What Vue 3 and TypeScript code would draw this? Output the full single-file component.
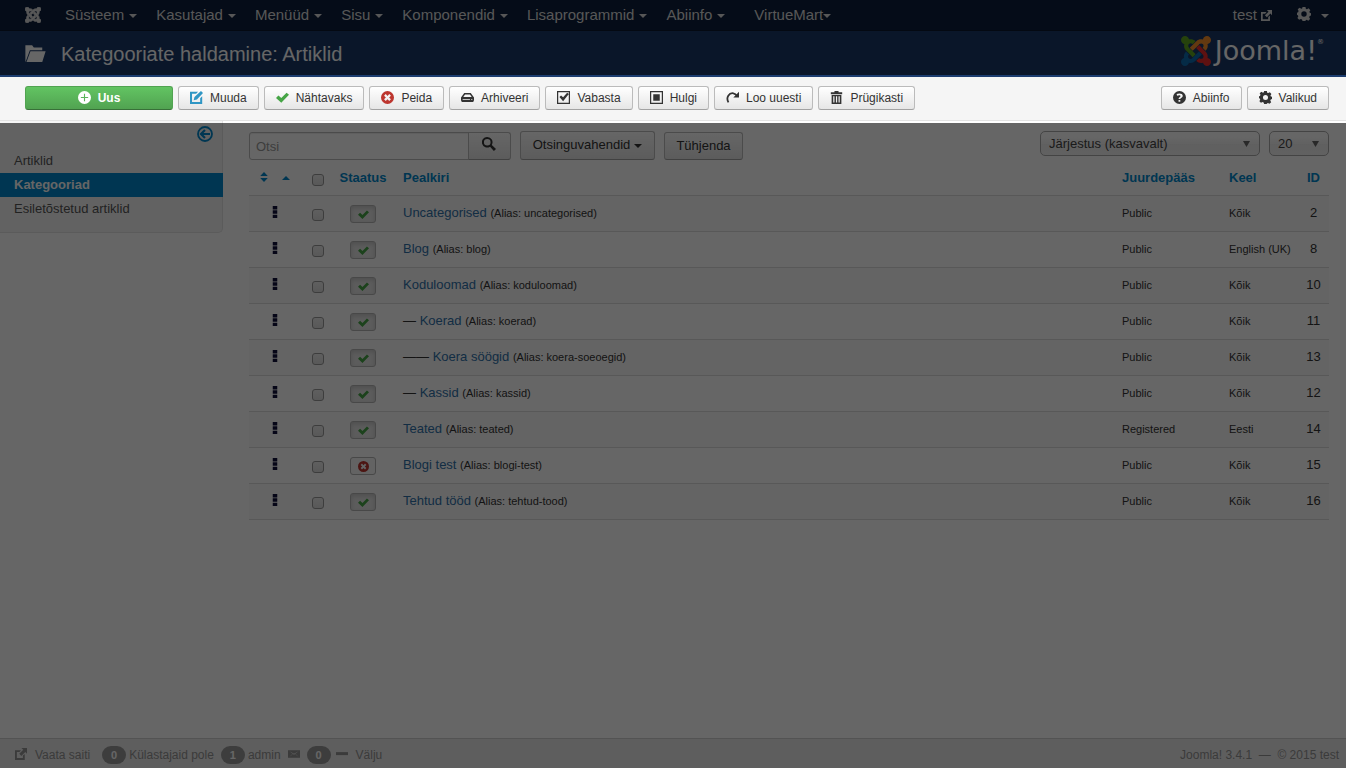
<script setup lang="ts">
import { ref } from 'vue'

interface Icon { fill?: string; stroke?: string; width?: number }

const icons: Record<string, Icon> = {
  plus: { fill: 'M8 0a8 8 0 1 0 0 16A8 8 0 0 0 8 0zM7.3 3.5h1.4v3.8h3.8v1.4H8.7v3.8H7.3V8.700H3.500V7.300h3.800z' },
  edit: { fill: 'M0 1h10L7.500 3.500H2.500v10h10V9L15 6.500V16H0zM13.500 0L16 2.500L8.500 10.500L4.500 11.500l1-4z' },
  check: { fill: 'M0 8.500l3-3 3.500 3.200L13 2l3 2.700L6.500 14.500z' },
  cancel: { fill: 'M8 0a8 8 0 1 0 0 16A8 8 0 0 0 8 0zM5.800 3.800L8 6l2.200-2.200 2 2L10 8l2.200 2.200-2 2L8 10l-2.200 2.200-2-2L6 8 3.800 5.800z' },
  drive: { fill: 'M4 2.500h8L16 8v3.500l-1 2H1l-1-2V8zM5 4.200L2.800 7.500h10.400l-2.200-3.300zM2 10v1.200h9V10zM12.500 10v1.200H14V10z' },
  checkin: { fill: 'M0 0h16v16H0zM1.500 1.500v13h13v-13zM3 7.500L5 5.500l2.500 2.300L12.500 2l2 1.800L7.500 12.500z' },
  batch: { fill: 'M0 0h16v16H0zM1.500 1.500v13h13v-13zM4 4h8v8H4z' },
  redo: { fill: 'M16 1v7H9l2.600-2.500z', stroke: 'M3 14C-.5 8 4 2 9 2.800c2 .3 3.500 1.500 4.500 3', width: 2.2 },
  trash: { fill: 'M5.500 0h5v1.500H15V4H1V1.500h4.500zM2 5h12v11H2zM4 6.500V14h1.500V6.500zM7.300 6.500V14h1.500V6.500zM10.500 6.500V14H12V6.500z' },
  help: { fill: 'M8 0a8 8 0 1 0 0 16A8 8 0 0 0 8 0zM4.500 3.800C6.500 2.500 12 2.300 12 6c0 2-3 2.300-3 3.800H6.800C6.800 7.500 9.300 7.300 9.300 6S6.500 5 5 5.800zM6.800 11H9v2.200H6.800z' },
  gear: { fill: 'M6.300 0h3.400l.4 2 1.200.6 2-1.100 2 2.100-1.200 1.900.5 1.200 1.400.5v2.600l-1.500.6-.6 1.400 1.100 2-2.100 2-1.900-1.100-1.200.6L9.500 16H6.300l-.6-1.800-1.300-.6-2 1L.5 12.500l1-2L1 9.300 0 9V6.500l1.200-.5.6-1.300-1-2L3 .9l1.900 1.200 1-.5zM8 4.900a3.100 3.100 0 1 0 0 6.200A3.100 3.100 0 0 0 8 4.900z' },
  external: { fill: 'M0 3h8L6 5.300H2.500v8h8V10l2.500-2v8H0zM8.500 0H16v7.500l-2.300-2.300L8.500 10.500 5.700 7.700l5.300-5.300z' },
  search: { fill: 'M6 0a6 6 0 1 0 3.200 11l4.400 4.900 2.400-2.300L11.200 9A6 6 0 0 0 6 0zM6 2.200a3.800 3.800 0 1 1 0 7.600A3.800 3.800 0 0 1 6 2.200z' },
  mail: { fill: 'M0 3h16v10H0zM1.500 4L8 9l6.500-5L8 7.500zM1.500 12L6 8.500l-.5-.3zM14.500 12L10 8.500l.5-.3z' },
  minus: { fill: 'M0 5.500h16v4H0z' },
  back: { stroke: 'M8 1a7 7 0 1 0 0 14A7 7 0 0 0 8 1z', width: 1.8 },
  dots: { fill: 'M5 0h6v4.500H5zM5 5.800h6v4.500H5zM5 11.500h6V16H5z' },
  sort: { fill: 'M8 0l6 6.500H2zM8 16L2 9.500h12z' },
  folder: { fill: 'M0 16V1h6l1.500 2H15v2.500H4L.5 15zM4.500 6.500H18l-3 9.500H1z' },
}

const marks = [
  { name: 'blue', d: 'M16.719 14.759L14.22 17.26l-2.37 2.37-.462.466c-1.368 1.365-3.297 1.83-5.047 1.397-.327 1.424-1.604 2.49-3.13 2.49C1.438 23.983 0 22.547 0 20.772c0-1.518 1.055-2.789 2.469-3.123-.446-1.76.016-3.705 1.396-5.08l.179-.18 2.37 2.37-.184.181c-.769.779-.769 2.024 0 2.789.771.78 2.022.78 2.787 0l.465-.465 2.367-2.371 2.502-2.506 2.367 2.372z' },
  { name: 'red', d: 'M17.643 21.411c-1.822.563-3.885.12-5.328-1.318l-.18-.185 2.365-2.369.18.184c.771.768 2.018.768 2.787 0 .765-.765.769-2.01-.004-2.781l-.466-.465-2.365-2.37-2.502-2.503 2.37-2.369 2.499 2.505 2.367 2.37.464.464c1.365 1.36 1.846 3.278 1.411 5.021 1.56.224 2.759 1.56 2.759 3.18 0 1.784-1.439 3.21-3.209 3.21-1.545 0-2.851-1.096-3.135-2.565z' },
  { name: 'orange', d: 'M6.975 9.461L9.46 6.975l2.37-2.369.462-.461C13.74 2.7 15.772 2.251 17.58 2.79 17.79 1.212 19.148 0 20.791 0 22.56 0 24 1.434 24 3.209c0 1.631-1.217 2.979-2.79 3.186.519 1.799.068 3.816-1.35 5.234l-.182.184-2.369-2.369.184-.184c.769-.77.769-2.016 0-2.783-.766-.766-2.011-.768-2.781.003l-.462.461-2.37 2.369-2.505 2.502-2.37-2.354z' },
  { name: 'green', d: 'M3.065 6.551C1.346 6.398 0 4.957 0 3.199 0 1.429 1.438 0 3.209 0c1.603 0 2.937 1.166 3.171 2.699 1.771-.465 3.743.004 5.133 1.398l.181.183-2.369 2.37-.182-.184c-.77-.77-2.016-.77-2.783 0-.77.766-.77 2.01 0 2.779l.465.465 2.371 2.369 2.503 2.505-2.367 2.37-2.505-2.503-2.366-2.37L4 11.619c-1.391-1.379-1.846-3.335-1.38-5.094z' },
]

const menu = ['Süsteem', 'Kasutajad', 'Menüüd', 'Sisu', 'Komponendid', 'Lisaprogrammid', 'Abiinfo']

const actions = [
  { icon: 'plus', label: 'Uus', kind: 'new' },
  { icon: 'edit', label: 'Muuda', kind: 'info' },
  { icon: 'check', label: 'Nähtavaks', kind: 'ok' },
  { icon: 'cancel', label: 'Peida', kind: 'bad' },
  { icon: 'drive', label: 'Arhiveeri', kind: '' },
  { icon: 'checkin', label: 'Vabasta', kind: '' },
  { icon: 'batch', label: 'Hulgi', kind: '' },
  { icon: 'redo', label: 'Loo uuesti', kind: '' },
  { icon: 'trash', label: 'Prügikasti', kind: '' },
]

interface Row { id: number; title: string; alias: string; level: number; access: string; language: string; published: boolean }

const rows: Row[] = [
  { id: 2, title: 'Uncategorised', alias: 'uncategorised', level: 0, access: 'Public', language: 'Kõik', published: true },
  { id: 8, title: 'Blog', alias: 'blog', level: 0, access: 'Public', language: 'English (UK)', published: true },
  { id: 10, title: 'Koduloomad', alias: 'koduloomad', level: 0, access: 'Public', language: 'Kõik', published: true },
  { id: 11, title: 'Koerad', alias: 'koerad', level: 1, access: 'Public', language: 'Kõik', published: true },
  { id: 13, title: 'Koera söögid', alias: 'koera-soeoegid', level: 2, access: 'Public', language: 'Kõik', published: true },
  { id: 12, title: 'Kassid', alias: 'kassid', level: 1, access: 'Public', language: 'Kõik', published: true },
  { id: 14, title: 'Teated', alias: 'teated', level: 0, access: 'Registered', language: 'Eesti', published: true },
  { id: 15, title: 'Blogi test', alias: 'blogi-test', level: 0, access: 'Public', language: 'Kõik', published: false },
  { id: 16, title: 'Tehtud tööd', alias: 'tehtud-tood', level: 0, access: 'Public', language: 'Kõik', published: true },
]

const query = ref('')
const order = ref('asc')
const limit = ref('20')
</script>

<template>
  <div class="page">
    <nav class="navbar">
      <a class="brand" href="#" aria-label="Joomla">
        <svg viewBox="0 0 24 24"><path v-for="m in marks" :key="m.name" :d="m.d" /></svg>
      </a>
      <a v-for="m in menu" :key="m" class="menu" href="#">{{ m }}<i class="caret"></i></a>
      <a class="menu shop" href="#">VirtueMart<i class="caret"></i></a>
      <a class="site" href="#">test
        <svg class="icon tiny" viewBox="0 0 16 16"><path :d="icons.external.fill" fill-rule="evenodd" /></svg>
      </a>
      <a class="user" href="#" aria-label="Admin">
        <svg class="icon gear" viewBox="0 0 16 16"><path :d="icons.gear.fill" fill-rule="evenodd" /></svg>
        <i class="caret"></i>
      </a>
    </nav>

    <header class="header">
      <svg class="folder" viewBox="0 0 18 16"><path :d="icons.folder.fill" /></svg>
      <h1>Kategooriate haldamine: Artiklid</h1>
      <div class="logo">
        <svg viewBox="0 0 24 24"><path v-for="m in marks" :key="m.name" :class="m.name" :d="m.d" /></svg>
        <span>Joomla!</span><sup>®</sup>
      </div>
    </header>

    <div class="toolbar">
      <button v-for="a in actions" :key="a.label" type="button" class="btn small" :class="a.kind">
        <svg class="icon" viewBox="0 0 16 16">
          <path :d="icons[a.icon].fill" fill-rule="evenodd" />
          <path v-if="icons[a.icon].stroke" class="line" :d="icons[a.icon].stroke" :stroke-width="icons[a.icon].width" />
        </svg>{{ a.label }}
      </button>
      <span class="spacer"></span>
      <button type="button" class="btn small">
        <svg class="icon" viewBox="0 0 16 16"><path :d="icons.help.fill" fill-rule="evenodd" /></svg>Abiinfo
      </button>
      <button type="button" class="btn small">
        <svg class="icon" viewBox="0 0 16 16"><path :d="icons.gear.fill" fill-rule="evenodd" /></svg>Valikud
      </button>
    </div>

    <div class="body">
      <aside class="sidebar">
        <button type="button" class="toggle" aria-label="Peida külgriba">
          <svg viewBox="0 0 16 16"><path :d="icons.back.stroke" class="line" :stroke-width="icons.back.width" />
            <path d="M13 8H4.500M8 4L4 8l4 4" class="line" stroke-width="2.2" /></svg>
        </button>
        <a href="#">Artiklid</a>
        <a href="#" class="active">Kategooriad</a>
        <a href="#">Esiletõstetud artiklid</a>
      </aside>

      <main class="content">
        <div class="filters">
          <div class="search">
            <input v-model="query" type="text" placeholder="Otsi" aria-label="Otsi" />
            <button type="button" class="btn" aria-label="Otsi">
              <svg class="lens" viewBox="0 0 16 16"><path :d="icons.search.fill" fill-rule="evenodd" /></svg>
            </button>
          </div>
          <button type="button" class="btn tools">Otsinguvahendid<i class="caret"></i></button>
          <button type="button" class="btn clear">Tühjenda</button>
          <span class="spacer"></span>
          <div class="select wide">
            <select v-model="order" aria-label="Järjestus"><option value="asc">Järjestus (kasvavalt)</option></select>
            <svg viewBox="0 0 8 8"><path d="M0 1h8L4 8z" /></svg>
          </div>
          <div class="select">
            <select v-model="limit" aria-label="Kirjeid lehel"><option value="20">20</option></select>
            <svg viewBox="0 0 8 8"><path d="M0 1h8L4 8z" /></svg>
          </div>
        </div>

        <table>
          <colgroup>
            <col class="c-drag" /><col class="c-check" /><col class="c-status" /><col />
            <col class="c-access" /><col class="c-lang" /><col class="c-id" />
          </colgroup>
          <thead>
            <tr>
              <th><a class="sorter" href="#" aria-label="Järjesta">
                <svg class="icon sort" viewBox="0 0 16 16"><path :d="icons.sort.fill" /></svg><i class="caret up"></i>
              </a></th>
              <th class="mid"><input type="checkbox" aria-label="Vali kõik" /></th>
              <th class="mid"><a href="#">Staatus</a></th>
              <th><a href="#">Pealkiri</a></th>
              <th><a href="#">Juurdepääs</a></th>
              <th><a href="#">Keel</a></th>
              <th class="mid"><a href="#">ID</a></th>
            </tr>
          </thead>
          <tbody>
            <tr v-for="r in rows" :key="r.id">
              <td class="mid"><svg class="dots" viewBox="0 0 16 16"><path :d="icons.dots.fill" /></svg></td>
              <td class="mid"><input type="checkbox" :aria-label="r.title" /></td>
              <td class="mid">
                <button type="button" class="state" :class="r.published ? 'ok' : 'bad'" :aria-label="r.title">
                  <svg viewBox="0 0 16 16"><path :d="icons[r.published ? 'check' : 'cancel'].fill" fill-rule="evenodd" /></svg>
                </button>
              </td>
              <td><span v-if="r.level">{{ '—'.repeat(r.level) }}&nbsp;</span><a href="#">{{ r.title }}</a> <small>(Alias: {{ r.alias }})</small></td>
              <td><small>{{ r.access }}</small></td>
              <td><small>{{ r.language }}</small></td>
              <td class="mid">{{ r.id }}</td>
            </tr>
          </tbody>
        </table>
      </main>
    </div>

    <footer class="footer">
      <a href="#" class="view"><svg class="icon" viewBox="0 0 16 16"><path :d="icons.external.fill" fill-rule="evenodd" /></svg>Vaata saiti</a>
      <span class="badge">0</span><span class="after">Külastajaid pole</span>
      <span class="badge">1</span><span class="after">admin</span>
      <svg class="icon mail" viewBox="0 0 16 16"><path :d="icons.mail.fill" fill-rule="evenodd" /></svg>
      <span class="badge">0</span>
      <a href="#" class="exit"><svg class="icon" viewBox="0 0 16 16"><path :d="icons.minus.fill" /></svg>Välju</a>
      <span class="spacer"></span>
      <span>Joomla! 3.4.1 &nbsp;—&nbsp; © 2015 test</span>
    </footer>
  </div>
</template>

<style>
body { margin: 0; background: #fff; }
</style>

<style scoped>
* { box-sizing: border-box; }
.page {
  position: relative;
  display: flex;
  flex-direction: column;
  min-height: 100vh;
  overflow: hidden;
  background: #fff;
  color: #333;
  font: 13px/18px "Liberation Sans", Arial, sans-serif;
}
a { color: #3071a9; text-decoration: none; }
button, input, select { font: inherit; color: inherit; }
svg { display: block; flex: none; fill: currentColor; }
.line { fill: none; stroke: currentColor; }
.spacer { flex: 1; }
.icon { width: 12px; height: 12px; }
.caret {
  display: inline-block;
  border: 4px solid transparent;
  border-top-color: currentColor;
  border-bottom: 0;
}
.caret.up { border-top: 0; border-bottom: 4px solid currentColor; }

.navbar {
  display: flex;
  align-items: center;
  height: 31px;
  padding: 0 17px 0 25px;
  background: #0d1f3c;
  border-bottom: 1px solid #0a172d;
  font-size: 15px;
  line-height: 30px;
}
.navbar a { display: flex; align-items: center; color: #d9d9d9; }
.brand { margin-right: 24px; }
.brand svg { width: 16px; height: 16px; stroke: currentColor; }
.menu { gap: 5px; margin-right: 19px; }
.menu .caret, .user .caret { margin-top: 2px; }
.menu.shop { gap: 0; margin-left: 10px; }
.site { gap: 4px; margin-left: auto; }
.icon.tiny { width: 11px; height: 11px; }
.user { gap: 10px; margin-left: 25px; }
.icon.gear { width: 14px; height: 14px; margin-bottom: 2px; }

.header {
  display: flex;
  align-items: center;
  height: 46px;
  padding: 0 22px 0 25px;
  background: #1a3867;
  border-bottom: 2px solid #1c3d70;
  color: #fff;
}
.folder { width: 21px; height: 18px; }
h1 { flex: 1; margin: 2px 0 0 15px; font-size: 20px; font-weight: 400; line-height: 44px; }
.logo { display: flex; align-items: center; height: 44px; font-family: "DejaVu Sans", sans-serif; font-size: 27px; line-height: 44px; }
.logo svg { width: 30px; height: 30px; margin: 0 4px 4px 0; }
.logo span { margin-bottom: 4px; }
.logo sup { align-self: flex-start; margin-top: 6px; font-size: 7px; line-height: 10px; }
.green { fill: #5fa51f; }
.orange { fill: #f8902a; }
.red { fill: #ea2c2c; }
.blue { fill: #0d6bb0; }

.toolbar {
  position: relative;
  z-index: 1;
  display: flex;
  gap: 5px;
  padding: 9px 17px 10px 25px;
  background: #f5f5f5;
  border-bottom: 1px solid #e3e3e3;
}
/* Guided-tour spotlight: dims everything outside the toolbar */
.toolbar::after {
  content: "";
  position: absolute;
  inset: -2px 0 -3px;
  box-shadow: 0 0 0 200vmax rgba(0, 0, 0, .6);
  pointer-events: none;
}
.btn {
  display: flex;
  align-items: center;
  justify-content: center;
  height: 28px;
  padding: 0 12px;
  border: 1px solid #bbb;
  border-bottom-color: #a2a2a2;
  border-radius: 3px;
  background: linear-gradient(#fff, #e6e6e6);
  white-space: nowrap;
}
.btn.small { gap: 7px; height: 24px; padding: 0 11px; font-size: 12px; line-height: 18px; }
.btn.small .icon { width: 13px; height: 13px; margin-bottom: 2px; }
.btn.new { width: 148px; color: #fff; font-weight: 700; background: linear-gradient(#62c462, #51a351); border-color: #51a351 #51a351 #387038; }
.info .icon { color: #2f96c4; }
.ok { color: #333; }
.ok svg { color: #46a546; }
.bad svg { color: #bd362f; }

.body { display: flex; flex: 1; align-items: flex-start; }
.sidebar {
  display: flex;
  flex-direction: column;
  width: 223px;
  padding: 5px 0 11px;
  background: #f5f5f5;
  border: 1px solid #e3e3e3;
  border-width: 0 1px 1px 0;
  border-radius: 0 0 5px 0;
}
.sidebar a { margin-right: -1px; padding: 3px 14px; color: #555; }
.sidebar a.active { background: #08c; color: #fff; font-weight: 700; }
.toggle { align-self: flex-end; margin: 0 9px 7px 0; padding: 0; border: 0; background: none; color: #08c; }
.toggle svg { width: 16px; height: 16px; }

.content { flex: 1; min-width: 0; padding: 10px 17px 0 26px; }
.filters { display: flex; align-items: flex-end; }
.search { display: flex; margin-right: 9px; }
.search input {
  width: 220px;
  height: 28px;
  padding: 0 6px;
  border: 1px solid #bbb;
  border-radius: 3px 0 0 3px;
  background: #fff;
  box-shadow: inset 0 1px 1px rgba(0, 0, 0, .075);
}
.search input::placeholder { color: #999; opacity: 1; }
.search .btn { width: 43px; margin-left: -1px; border-radius: 0 3px 3px 0; }
.lens { width: 14px; height: 14px; margin: 0 2px 4px 0; }
.btn.tools { gap: 4px; width: 135px; height: 29px; margin-right: 9px; padding-bottom: 2px; }
.btn.tools .caret { margin-top: 2px; }
.btn.clear { width: 79px; }
.select { position: relative; align-self: flex-start; width: 60px; margin-left: 9px; }
.select.wide { width: 220px; }
.select select {
  display: block;
  width: 100%;
  height: 25px;
  padding: 0 8px;
  border: 1px solid #aaa;
  border-radius: 5px;
  background: linear-gradient(#fff 20%, #f4f4f4 50%, #eee 52%, #f4f4f4);
  color: #444;
  appearance: none;
}
.select svg { position: absolute; top: 9px; right: 10px; width: 7px; height: 7px; fill: #666; pointer-events: none; }

table { width: 100%; border-collapse: separate; border-spacing: 0; table-layout: fixed; }
.c-drag { width: 52px; }
.c-check { width: 34px; }
.c-status { width: 56px; }
.c-access { width: 107px; }
.c-lang { width: 81px; }
.c-id { width: 31px; }
th, td { height: 36px; padding: 0 0 0 12px; border-bottom: 1px solid #ddd; text-align: left; vertical-align: middle; white-space: nowrap; }
td { padding-bottom: 2px; }
th a { color: #08c; }
th.mid { padding: 0; text-align: center; }
td.mid { padding: 0 0 2px; text-align: center; }
tbody tr:nth-child(odd) td { background: #f9f9f9; }
small { font-size: 11px; }
.sorter { display: flex; align-items: center; gap: 12px; margin-left: -3px; }
.icon.sort { margin-bottom: 1px; height: 10px; }
.dots { width: 12px; height: 12px; margin: 0 auto 2px; color: #10103a; }
input[type="checkbox"] {
  display: block;
  width: 12px;
  height: 12px;
  margin: 4px auto 0;
  border: 1px solid #999;
  border-radius: 3px;
  background: linear-gradient(#eee, #ddd);
  appearance: none;
}
.state {
  display: flex;
  align-items: center;
  justify-content: center;
  width: 26px;
  height: 18px;
  margin: 3px auto 0;
  padding: 0;
  border: 1px solid #b3b3b3;
  border-radius: 3px;
  background: #e6e6e6;
  box-shadow: inset 0 2px 4px rgba(0, 0, 0, .15);
}
.state.bad { background: #f8f8f8; box-shadow: none; }
.state svg { width: 11px; height: 11px; }

.footer {
  display: flex;
  align-items: center;
  height: 30px;
  padding: 3px 7px 0 15px;
  background: #ebebeb;
  border-top: 1px solid #d0d0d0;
  color: #949494;
  font-size: 12px;
}
.footer a { display: flex; align-items: center; gap: 8px; color: inherit; }
.footer .icon { margin-bottom: 2px; }
.footer .view { margin-right: 12px; }
.badge { width: 24px; height: 18px; border-radius: 9px; background: #999; color: #fff; font-size: 11px; font-weight: 700; line-height: 18px; text-align: center; }
.after { margin: 0 7px 0 3px; }
.mail { margin-right: 7px; }
.exit { margin-left: 5px; }
</style>
